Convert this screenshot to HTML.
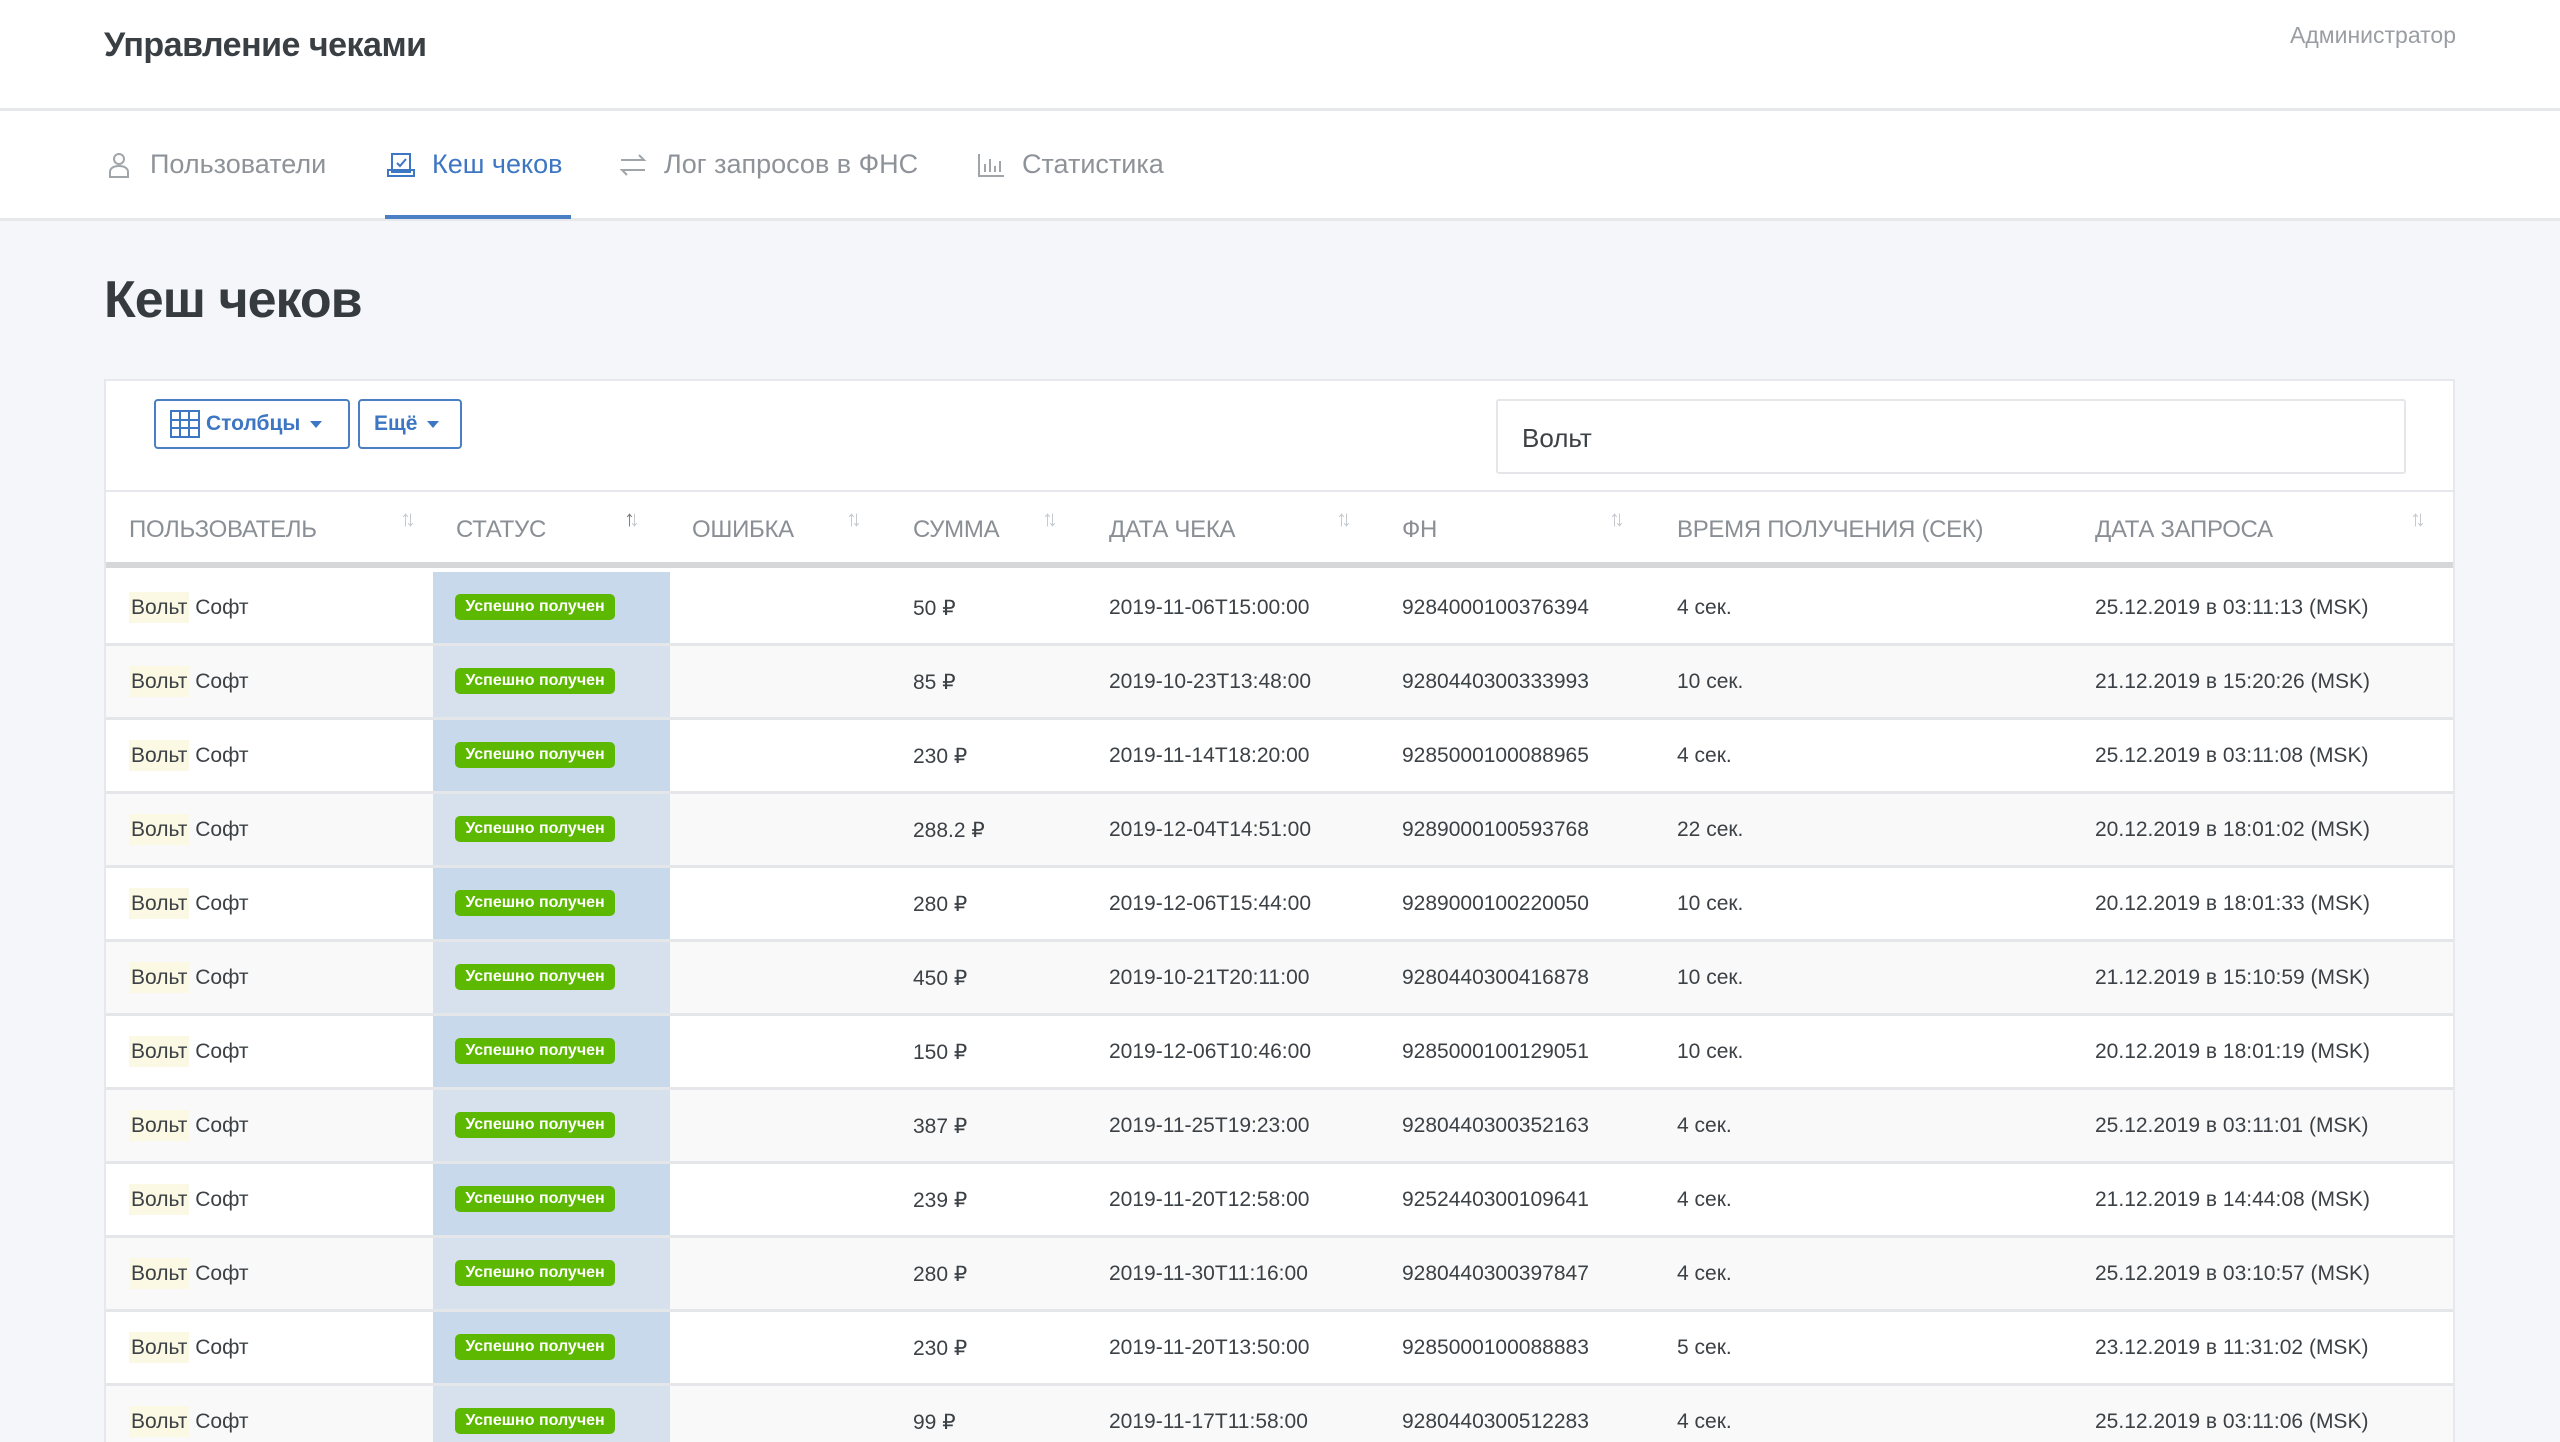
<!DOCTYPE html>
<html style="overflow:hidden;height:1442px"><head><meta charset="utf-8"><style>
*{box-sizing:border-box;margin:0;padding:0}
body{width:2560px;height:1442px;overflow:hidden;background:#f4f6f9;font-family:"Liberation Sans",sans-serif;color:#3c4146;position:relative}
.top{position:absolute;left:0;top:0;width:2560px;height:111px;background:#fff;border-bottom:3px solid #e6e8ec}
.top h1{position:absolute;left:104px;top:26px;font-size:34px;font-weight:bold;color:#3a3f44;letter-spacing:-0.5px}
.adm{position:absolute;right:104px;top:22px;font-size:23px;color:#9a9ea3}
.nav{position:absolute;left:0;top:111px;width:2560px;height:110px;background:#fff;border-bottom:3px solid #e6e8ec}
.ni{position:absolute;top:38px;font-size:27px;color:#8e9399;display:flex;align-items:center;gap:16px}
.ni svg{width:30px;height:30px}
.act{color:#3d76c2}
.ul{position:absolute;left:385px;top:104px;width:186px;height:4px;background:#4a7fc4}
.ttl{position:absolute;left:104px;top:270px;font-size:52px;font-weight:bold;color:#363b40;letter-spacing:-1px}
.card{position:absolute;left:104px;top:379px;width:2351px;height:1063px;background:#fff;border:2px solid #e6e8ee;border-bottom:none;overflow:hidden}
.btn{position:absolute;top:18px;height:50px;border:2px solid #4a7fc4;border-radius:4px;color:#3d76c2;font-weight:bold;font-size:21px;display:flex;align-items:center;padding-left:14px;gap:6px}
.car{width:0;height:0;border-left:6px solid transparent;border-right:6px solid transparent;border-top:7px solid #3d76c2;margin-left:4px}
.srch{position:absolute;left:1390px;top:18px;width:910px;height:75px;border:2px solid #e4e6ea;border-radius:3px;font-size:26px;padding:22px 24px;color:#3c4146}
.hd{position:absolute;left:0;top:109px;width:2347px;height:78px;border-top:2px solid #e6e8ee;border-bottom:6px solid #d6d7d9}
.hl{position:absolute;top:24px;font-size:24px;color:#8a8f95;letter-spacing:-0.3px}
.so{position:absolute;top:14px;font-size:22px;color:#c4c8cc;letter-spacing:-6px}
.row{position:absolute;left:0;width:2347px;height:74px;border-bottom:3px solid #e4e6e9;font-size:21px}
.row.e{background:#f9f9f9}
.row .st{position:absolute;left:327px;top:0;width:237px;height:71px;background:#c9d9ec}
.row.e .st{background:#d6e1ed}
.c{position:absolute;top:24px;white-space:nowrap}
.hi{background:#fbf8e3;padding:4px 2px}
.bd{position:absolute;left:22px;top:22px;width:160px;height:26px;background:#5cb800;border-radius:5px;color:#fff;font-weight:bold;font-size:16px;text-align:center;line-height:26px}
</style></head><body>
<div class="top"><h1>Управление чеками</h1><div class="adm">Администратор</div></div>
<div class="nav">
<div class="ni" style="left:104px"><svg viewBox="0 0 30 30" fill="none" stroke="#a0a5aa" stroke-width="2"><circle cx="15" cy="9" r="5"/><path d="M6 27v-5c0-4 4-6 9-6s9 2 9 6v5z"/></svg>Пользователи</div>
<div class="ni act" style="left:386px"><svg viewBox="0 0 30 30" fill="none" stroke="#3d76c2" stroke-width="2"><rect x="6" y="4" width="18" height="18"/><path d="M11 13l3 3 6-7M2 20h26v6H2z"/></svg>Кеш чеков</div>
<div class="ni" style="left:618px"><svg viewBox="0 0 30 30" fill="none" stroke="#a0a5aa" stroke-width="2"><path d="M3 10h23l-5-5M27 20H4l5 5"/></svg>Лог запросов в ФНС</div>
<div class="ni" style="left:976px"><svg viewBox="0 0 30 30" fill="none" stroke="#a0a5aa" stroke-width="2"><path d="M3 4v22h25M9 22v-8M14 22V9M19 22v-6M24 22V11"/></svg>Статистика</div>
<div class="ul"></div>
</div>
<div class="ttl">Кеш чеков</div>
<div class="card">
<div class="btn" style="left:48px;width:196px"><svg width="30" height="28" viewBox="0 0 30 28" fill="none" stroke="#3d76c2" stroke-width="2"><rect x="1" y="1" width="28" height="26"/><path d="M1 10h28M1 18h28M10 1v26M19 1v26"/></svg>Столбцы<span class="car"></span></div>
<div class="btn" style="left:252px;width:104px">Ещё<span class="car"></span></div>
<div class="srch">Вольт</div>
<div class="hd">
<div class="hl" style="left:23px">ПОЛЬЗОВАТЕЛЬ</div><div class="so" style="left:294px">↑↓</div>
<div class="hl" style="left:350px">СТАТУС</div><div class="so" style="left:518px"><span style="color:#777">↑</span>↓</div>
<div class="hl" style="left:586px">ОШИБКА</div><div class="so" style="left:740px">↑↓</div>
<div class="hl" style="left:807px">СУММА</div><div class="so" style="left:936px">↑↓</div>
<div class="hl" style="left:1003px">ДАТА ЧЕКА</div><div class="so" style="left:1230px">↑↓</div>
<div class="hl" style="left:1296px">ФН</div><div class="so" style="left:1503px">↑↓</div>
<div class="hl" style="left:1571px">ВРЕМЯ ПОЛУЧЕНИЯ (СЕК)</div>
<div class="hl" style="left:1989px">ДАТА ЗАПРОСА</div><div class="so" style="left:2304px">↑↓</div>
</div>
</div>
<div style="position:absolute;left:106px;top:572px">
<div class="row" style="top:0"><div class="st"><div class="bd">Успешно получен</div></div><div class="c" style="left:23px"><span class="hi">Вольт</span> Софт</div><div class="c" style="left:807px">50 ₽</div><div class="c" style="left:1003px">2019-11-06T15:00:00</div><div class="c" style="left:1296px">9284000100376394</div><div class="c" style="left:1571px">4 сек.</div><div class="c" style="left:1989px">25.12.2019 в 03:11:13 (MSK)</div></div>
<div class="row e" style="top:74px"><div class="st"><div class="bd">Успешно получен</div></div><div class="c" style="left:23px"><span class="hi">Вольт</span> Софт</div><div class="c" style="left:807px">85 ₽</div><div class="c" style="left:1003px">2019-10-23T13:48:00</div><div class="c" style="left:1296px">9280440300333993</div><div class="c" style="left:1571px">10 сек.</div><div class="c" style="left:1989px">21.12.2019 в 15:20:26 (MSK)</div></div>
<div class="row" style="top:148px"><div class="st"><div class="bd">Успешно получен</div></div><div class="c" style="left:23px"><span class="hi">Вольт</span> Софт</div><div class="c" style="left:807px">230 ₽</div><div class="c" style="left:1003px">2019-11-14T18:20:00</div><div class="c" style="left:1296px">9285000100088965</div><div class="c" style="left:1571px">4 сек.</div><div class="c" style="left:1989px">25.12.2019 в 03:11:08 (MSK)</div></div>
<div class="row e" style="top:222px"><div class="st"><div class="bd">Успешно получен</div></div><div class="c" style="left:23px"><span class="hi">Вольт</span> Софт</div><div class="c" style="left:807px">288.2 ₽</div><div class="c" style="left:1003px">2019-12-04T14:51:00</div><div class="c" style="left:1296px">9289000100593768</div><div class="c" style="left:1571px">22 сек.</div><div class="c" style="left:1989px">20.12.2019 в 18:01:02 (MSK)</div></div>
<div class="row" style="top:296px"><div class="st"><div class="bd">Успешно получен</div></div><div class="c" style="left:23px"><span class="hi">Вольт</span> Софт</div><div class="c" style="left:807px">280 ₽</div><div class="c" style="left:1003px">2019-12-06T15:44:00</div><div class="c" style="left:1296px">9289000100220050</div><div class="c" style="left:1571px">10 сек.</div><div class="c" style="left:1989px">20.12.2019 в 18:01:33 (MSK)</div></div>
<div class="row e" style="top:370px"><div class="st"><div class="bd">Успешно получен</div></div><div class="c" style="left:23px"><span class="hi">Вольт</span> Софт</div><div class="c" style="left:807px">450 ₽</div><div class="c" style="left:1003px">2019-10-21T20:11:00</div><div class="c" style="left:1296px">9280440300416878</div><div class="c" style="left:1571px">10 сек.</div><div class="c" style="left:1989px">21.12.2019 в 15:10:59 (MSK)</div></div>
<div class="row" style="top:444px"><div class="st"><div class="bd">Успешно получен</div></div><div class="c" style="left:23px"><span class="hi">Вольт</span> Софт</div><div class="c" style="left:807px">150 ₽</div><div class="c" style="left:1003px">2019-12-06T10:46:00</div><div class="c" style="left:1296px">9285000100129051</div><div class="c" style="left:1571px">10 сек.</div><div class="c" style="left:1989px">20.12.2019 в 18:01:19 (MSK)</div></div>
<div class="row e" style="top:518px"><div class="st"><div class="bd">Успешно получен</div></div><div class="c" style="left:23px"><span class="hi">Вольт</span> Софт</div><div class="c" style="left:807px">387 ₽</div><div class="c" style="left:1003px">2019-11-25T19:23:00</div><div class="c" style="left:1296px">9280440300352163</div><div class="c" style="left:1571px">4 сек.</div><div class="c" style="left:1989px">25.12.2019 в 03:11:01 (MSK)</div></div>
<div class="row" style="top:592px"><div class="st"><div class="bd">Успешно получен</div></div><div class="c" style="left:23px"><span class="hi">Вольт</span> Софт</div><div class="c" style="left:807px">239 ₽</div><div class="c" style="left:1003px">2019-11-20T12:58:00</div><div class="c" style="left:1296px">9252440300109641</div><div class="c" style="left:1571px">4 сек.</div><div class="c" style="left:1989px">21.12.2019 в 14:44:08 (MSK)</div></div>
<div class="row e" style="top:666px"><div class="st"><div class="bd">Успешно получен</div></div><div class="c" style="left:23px"><span class="hi">Вольт</span> Софт</div><div class="c" style="left:807px">280 ₽</div><div class="c" style="left:1003px">2019-11-30T11:16:00</div><div class="c" style="left:1296px">9280440300397847</div><div class="c" style="left:1571px">4 сек.</div><div class="c" style="left:1989px">25.12.2019 в 03:10:57 (MSK)</div></div>
<div class="row" style="top:740px"><div class="st"><div class="bd">Успешно получен</div></div><div class="c" style="left:23px"><span class="hi">Вольт</span> Софт</div><div class="c" style="left:807px">230 ₽</div><div class="c" style="left:1003px">2019-11-20T13:50:00</div><div class="c" style="left:1296px">9285000100088883</div><div class="c" style="left:1571px">5 сек.</div><div class="c" style="left:1989px">23.12.2019 в 11:31:02 (MSK)</div></div>
<div class="row e" style="top:814px"><div class="st"><div class="bd">Успешно получен</div></div><div class="c" style="left:23px"><span class="hi">Вольт</span> Софт</div><div class="c" style="left:807px">99 ₽</div><div class="c" style="left:1003px">2019-11-17T11:58:00</div><div class="c" style="left:1296px">9280440300512283</div><div class="c" style="left:1571px">4 сек.</div><div class="c" style="left:1989px">25.12.2019 в 03:11:06 (MSK)</div></div>
</div>
</body></html>
